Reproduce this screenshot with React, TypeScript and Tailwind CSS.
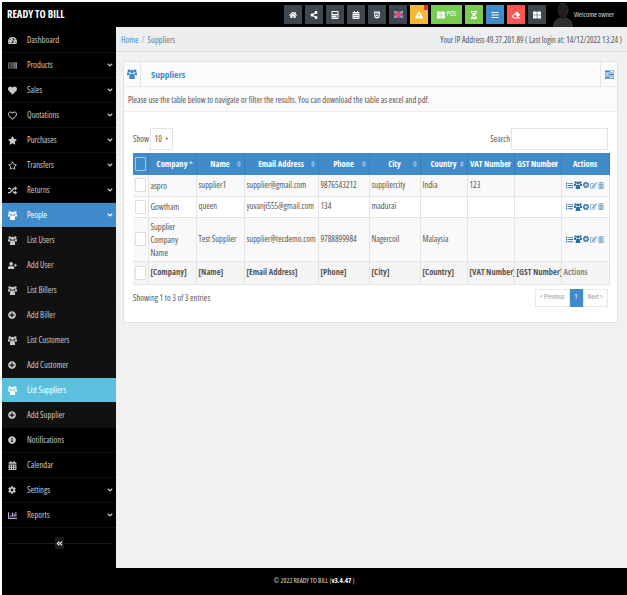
import React from "react";
import {
  FaHome, FaShareAlt, FaCalculator, FaCalendarAlt, FaHtml5, FaExclamationTriangle, FaThLarge, FaHourglassHalf, FaBars, FaEraser,
  FaAngleDown, FaAngleDoubleLeft, FaUserPlus, FaPlusCircle, FaInfoCircle, FaChartBar, FaHeart, FaRegHeart, FaStar, FaRegStar, FaRandom, FaCog, FaTachometerAlt,
  FaBarcode, FaList, FaEdit, FaTrashAlt, FaSort, FaSortUp,
} from "react-icons/fa";

function Group({ className }: { className?: string }) {
  return (
    <svg className={className} viewBox="0 0 10 10" fill="currentColor">
      <circle cx="2" cy="1.8" r="1.5" />
      <circle cx="8" cy="1.8" r="1.5" />
      <circle cx="5" cy="2.6" r="1.9" />
      <path d="M0 3.6H2.6L2.2 6.2H0ZM10 3.6H7.4L7.8 6.2H10Z" />
      <path d="M2.6 5H7.4L8 10H2Z" />
    </svg>
  );
}

function TasksIcon({ className }: { className?: string }) {
  return (
    <svg className={className} viewBox="0 0 10 10" fill="currentColor">
      <path d="M0 0.5H10V2.8H0ZM0 3.9H10V6.2H0ZM0 7.3H10V9.6H0Z" />
      <path d="M6 1.2H9V2.1H6ZM1 4.6H4V5.5H1ZM5 8H9V8.9H5Z" fill="#fff" />
    </svg>
  );
}

type Nav = { label: string; icon: React.ReactNode; caret?: boolean; kind?: "sub" | "open" | "active" };
const ic = "w-[9px] h-[9px]";
const pc = "w-[8px] h-[8px]";
const nav: Nav[] = [
  { label: "Dashboard", icon: <FaTachometerAlt className={ic} /> },
  { label: "Products", icon: <FaBarcode className={ic} />, caret: true },
  { label: "Sales", icon: <FaHeart className={ic} />, caret: true },
  { label: "Quotations", icon: <FaRegHeart className={ic} />, caret: true },
  { label: "Purchases", icon: <FaStar className={ic} />, caret: true },
  { label: "Transfers", icon: <FaRegStar className={ic} />, caret: true },
  { label: "Returns", icon: <FaRandom className={ic} />, caret: true },
  { label: "People", icon: <Group className={ic} />, caret: true, kind: "open" },
  { label: "List Users", icon: <Group className={ic} />, kind: "sub" },
  { label: "Add User", icon: <FaUserPlus className={ic} />, kind: "sub" },
  { label: "List Billers", icon: <Group className={ic} />, kind: "sub" },
  { label: "Add Biller", icon: <FaPlusCircle className={pc} />, kind: "sub" },
  { label: "List Customers", icon: <Group className={ic} />, kind: "sub" },
  { label: "Add Customer", icon: <FaPlusCircle className={pc} />, kind: "sub" },
  { label: "List Suppliers", icon: <Group className={ic} />, kind: "active" },
  { label: "Add Supplier", icon: <FaPlusCircle className={pc} />, kind: "sub" },
  { label: "Notifications", icon: <FaInfoCircle className={pc} /> },
  { label: "Calendar", icon: <FaCalendarAlt className={ic} /> },
  { label: "Settings", icon: <FaCog className={pc} />, caret: true },
  { label: "Reports", icon: <FaChartBar className={`${ic} text-[#b9a7d6]`} />, caret: true },
];

const ti = "w-[8px] h-[8px]";
function UkFlag() {
  return (
    <svg width="9" height="7" viewBox="0 0 9 7">
      <rect width="9" height="7" fill="#5a6aa8" />
      <path d="M0 0L9 7M9 0L0 7" stroke="#e8c8d0" strokeWidth="1" />
      <path d="M4.5 0V7M0 3.5H9" stroke="#d9485f" strokeWidth="2" />
    </svg>
  );
}
const topBtns: { icon: React.ReactNode; bg: string; w: string; label?: string; badge?: boolean }[] = [
  { icon: <FaHome className={ti} />, bg: "bg-[#3f474e]", w: "w-[18px]" },
  { icon: <FaShareAlt className={ti} />, bg: "bg-[#3f474e]", w: "w-[18px]" },
  { icon: <FaCalculator className={ti} />, bg: "bg-[#3f474e]", w: "w-[18px]" },
  { icon: <FaCalendarAlt className={ti} />, bg: "bg-[#3f474e]", w: "w-[18px]" },
  { icon: <FaHtml5 className={ti} />, bg: "bg-[#3f474e]", w: "w-[18px]" },
  { icon: <UkFlag />, bg: "bg-[#3f474e]", w: "w-[18px]" },
  { icon: <FaExclamationTriangle className={ti} />, bg: "bg-[#f7b733]", w: "w-[18px]", badge: true },
  { icon: <FaThLarge className={ti} />, bg: "bg-[#78cd51]", w: "w-[31px]", label: "POS" },
  { icon: <FaHourglassHalf className={ti} />, bg: "bg-[#78cd51]", w: "w-[18px]" },
  { icon: <FaBars className={ti} />, bg: "bg-[#428bca]", w: "w-[18px]" },
  { icon: <FaEraser className={ti} />, bg: "bg-[#ff5454]", w: "w-[18px]" },
  { icon: <FaThLarge className={ti} />, bg: "bg-[#3f474e]", w: "w-[18px]" },
];

const cols: { label: string; w: string; sort?: "up" | "both" | "none" }[] = [
  { label: "Company", w: "w-[48px]", sort: "up" },
  { label: "Name", w: "w-[48px]", sort: "both" },
  { label: "Email Address", w: "w-[74px]", sort: "both" },
  { label: "Phone", w: "w-[51px]", sort: "both" },
  { label: "City", w: "w-[51px]", sort: "both" },
  { label: "Country", w: "w-[47px]", sort: "both" },
  { label: "VAT Number", w: "w-[47px]", sort: "both" },
  { label: "GST Number", w: "w-[47px]", sort: "both" },
  { label: "Actions", w: "w-[48px]", sort: "none" },
];

const rows = [
  { c: ["aspro"], d: ["supplier1", "supplier@gmail.com", "9876543212", "suppliercity", "India", "123", ""], h: "h-[21px]", bg: "bg-[#f9f9f9]" },
  { c: ["Gowtham"], d: ["queen", "yuvanji555@gmail.com", "134", "madurai", "", "", ""], h: "h-[21px]", bg: "bg-white" },
  { c: ["Supplier", "Company", "Name"], d: ["Test Supplier", "supplier@tecdemo.com", "9788899984", "Nagercoil", "Malaysia", "", ""], h: "h-[44px]", bg: "bg-[#f9f9f9]" },
];
const foot = ["[Company]", "[Name]", "[Email Address]", "[Phone]", "[City]", "[Country]", "[VAT Number]", "[GST Number]"];

const td = "border-r border-b border-[#e4e4e4] px-[2px] overflow-hidden whitespace-nowrap align-middle";

function SortIcon({ s }: { s?: "up" | "both" | "none" }) {
  if (s === "none" || !s) return null;
  return (
    <span className={`absolute right-[2px] top-1/2 -translate-y-1/2 text-white ${s === "both" ? "opacity-50" : "opacity-80"}`}>
      {s === "both" ? <FaSort className="w-[6px] h-[7px]" /> : <FaSortUp className="w-[6px] h-[7px]" />}
    </span>
  );
}

function Check({ dark }: { dark?: boolean }) {
  return (
    <div className={`mx-auto w-[11px] h-[14px] rounded-[1px] border ${dark ? "border-[#a9c7e3] bg-[#428bca]" : "border-[#dedede] bg-white"}`} />
  );
}

function Actions() {
  return (
    <div className="flex items-center justify-center gap-[1px] text-[#2f6fa8]">
      <FaList className="w-[7px] h-[7px]" />
      <Group className="w-[8px] h-[8px]" />
      <FaPlusCircle className="w-[6px] h-[6px]" />
      <FaEdit className="w-[7px] h-[7px] text-[#7fa9cc]" />
      <FaTrashAlt className="w-[6px] h-[7px] text-[#7fa9cc]" />
    </div>
  );
}

export default function App() {
  return (
    <div className="w-[627px] h-[595px] bg-white pl-[2px] pt-[2px] font-['Open_Sans',sans-serif] [font-stretch:75%] text-[8.5px] text-[#555] overflow-hidden">
      <div className="h-full flex flex-col bg-black">
        <header className="h-[25px] flex items-center shrink-0 bg-black">
          <div className="pl-[5px] w-[114px] text-white font-bold text-[10.5px]">READY TO BILL</div>
          <div className="flex-1 flex items-center justify-end gap-[3px]">
            {topBtns.map((b, i) => (
              <div key={i} className={`relative h-[19px] ${b.w} ${b.bg} flex items-center justify-center gap-[2px] text-white`}>
                {b.icon}
                {b.label && <span className="text-[7px]">{b.label}</span>}
                {b.badge && <span className="absolute top-0 right-0 w-[4px] h-[5px] bg-[#d9363e]" />}
              </div>
            ))}
            <div className="flex items-center w-[78px] shrink-0">
              <svg className="ml-[4px]" width="20" height="25" viewBox="0 0 20 25">
                <ellipse cx="10" cy="8" rx="5" ry="7" fill="#1f1f1f" stroke="#3a3a3a" strokeWidth="0.6" />
                <path d="M0 25C0 18 5 16 8 15L10 17L12 15C15 16 20 18 20 25Z" fill="#2e2e2e" />
              </svg>
              <span className="text-[7.2px] text-[#d8d8d8] ml-[1px] whitespace-nowrap">Welcome owner</span>
            </div>
          </div>
        </header>
        <div className="flex-1 flex min-h-0">
          <aside className="w-[114px] shrink-0 flex flex-col pt-[1px]">
            {nav.map((n) => (
              <div
                key={n.label}
                className={`h-[25px] shrink-0 flex items-center pl-[6px] pr-[2px] border-b border-[#0f0f0f] ${
                  n.kind === "open" ? "bg-[#428bca] text-white" : n.kind === "active" ? "bg-[#5bc0de] text-white" : n.kind === "sub" ? "bg-[#111] text-[#c8c8c8]" : "bg-black text-[#c8c8c8]"
                }`}
              >
                <span className="w-[19px] flex">{n.icon}</span>
                <span className="flex-1 whitespace-nowrap">{n.label}</span>
                {n.caret && <FaAngleDown className="w-[8px] h-[8px]" />}
              </div>
            ))}
            <div className="mx-[5px] mt-[9px] h-[12px] flex items-center">
              <div className="flex-1 h-px bg-[#1c1c1c]" />
              <div className="w-[9px] h-[12px] bg-[#1c1c1c] flex items-center justify-center text-white">
                <FaAngleDoubleLeft className="w-[7px] h-[7px]" />
              </div>
              <div className="flex-1 h-px bg-[#1c1c1c]" />
            </div>
          </aside>
          <main className="flex-1 flex flex-col min-w-0 bg-[#f1f1f1]">
            <div className="h-[25px] shrink-0 bg-[#eceeef] border-b border-[#dedede] flex items-center justify-between pl-[5px] pr-[5px] pt-[2px]">
              <div>
                <span className="text-[#428bca]">Home</span>
                <span className="text-[#aaa] mx-[3px]">/</span>
                <span className="text-[#777]">Suppliers</span>
              </div>
              <span className="text-[#555] text-[8.3px]">Your IP Address 49.37.201.89 ( Last login at: 14/12/2022 13:24 )</span>
            </div>
            <div className="pl-[7px] pr-[9px] pt-[9px]">
              <div className="bg-white border border-[#e3e3e3]">
                <div className="h-[25px] bg-[#fbfbfb] border-b border-[#e8e8e8] flex items-center justify-between">
                  <div className="flex items-center h-full">
                    <div className="w-[17px] h-full border-r border-[#e8e8e8] flex items-center justify-center text-[#428bca]">
                      <Group className="w-[10px] h-[10px]" />
                    </div>
                    <span className="ml-[10px] pt-[2px] text-[#428bca] font-bold text-[9.5px]">Suppliers</span>
                  </div>
                  <div className="w-[17px] h-full border-l border-[#e8e8e8] flex items-center justify-center text-[#428bca]">
                    <TasksIcon className="w-[9px] h-[9px]" />
                  </div>
                </div>
                <div className="h-[25px] flex items-center px-[4px] pt-[2px] bg-[#fbfbfb] border-b border-[#ececec]">
                  Please use the table below to navigate or filter the results. You can download the table as excel and pdf.
                </div>
                <div className="px-[9px] pt-[16px] pb-[15px]">
                  <div className="flex items-center justify-between h-[22px]">
                    <div className="flex items-center gap-[1px]">
                      <span>Show</span>
                      <div className="w-[23px] h-[22px] border border-[#e3e3e3] flex items-center justify-center gap-[3px]">
                        <span>10</span>
                        <span className="text-[4px]">▼</span>
                      </div>
                    </div>
                    <div className="flex items-center gap-[1px]">
                      <span>Search</span>
                      <div className="w-[97px] h-[22px] border border-[#e3e3e3] bg-white" />
                    </div>
                  </div>
                  <table className="mt-[3px] table-fixed border-collapse w-[476px]">
                    <thead>
                      <tr className="h-[22px] bg-[#428bca] text-white font-bold">
                        <th className="w-[15px] border-r border-[#3b7db6]"><Check dark /></th>
                        {cols.map((c) => (
                          <th key={c.label} className={`relative ${c.w} border-r border-[#3b7db6] px-[1px] overflow-hidden whitespace-nowrap font-bold`}>
                            {c.label}
                            <SortIcon s={c.sort} />
                          </th>
                        ))}
                      </tr>
                    </thead>
                    <tbody>
                      {rows.map((r) => (
                        <tr key={r.c[0]} className={`${r.h} ${r.bg}`}>
                          <td className={td}><Check /></td>
                          <td className={`${td} leading-[13px]`}>
                            {r.c.map((t) => <div key={t}>{t}</div>)}
                          </td>
                          {r.d.map((t, i) => <td key={i} className={td}>{t}</td>)}
                          <td className={td}><Actions /></td>
                        </tr>
                      ))}
                      <tr className="h-[23px] bg-[#f5f5f5] font-bold">
                        <td className={td}><Check /></td>
                        {foot.map((f) => <td key={f} className={td}>{f}</td>)}
                        <td className={`${td} text-[#888]`}>Actions</td>
                      </tr>
                    </tbody>
                  </table>
                  <div className="flex items-center justify-between mt-[4px] h-[18px]">
                    <span className="pt-[1px]">Showing 1 to 3 of 3 entries</span>
                    <div className="flex h-[18px] text-[7px]">
                      <span className="px-[4px] border border-[#e8e8e8] flex items-center text-[#999]">&lt; Previous</span>
                      <span className="w-[13px] bg-[#428bca] text-white flex items-center justify-center">1</span>
                      <span className="px-[4px] border border-[#e8e8e8] flex items-center text-[#999]">Next &gt;</span>
                    </div>
                  </div>
                </div>
              </div>
            </div>
          </main>
        </div>
        <footer className="h-[27px] shrink-0 bg-black text-[#ddd] text-[7px] flex items-center justify-center pr-[1px]">
          <span>© 2022 READY TO BILL (<b className="text-white">v3.4.47</b> )</span>
        </footer>
      </div>
    </div>
  );
}
